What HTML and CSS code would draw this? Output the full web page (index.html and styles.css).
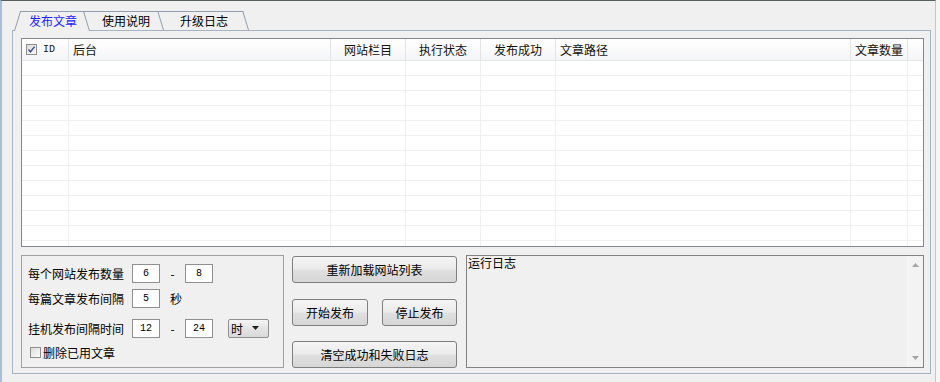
FILE: index.html
```html
<!DOCTYPE html>
<html>
<head>
    <meta charset="utf-8">
    <title>文章发布</title>
    <link rel="stylesheet" href="styles.css">
</head>
<body>
    <div class="window">
        <!-- Tabs -->
        <div class="tabs">
            <div class="tab tab-active">发布文章</div>
            <div class="tab tab-help">使用说明</div>
            <div class="tab tab-log">升级日志</div>
        </div>

        <div class="page">
            <!-- Site list -->
            <div class="list">
                <div class="list-head">
                    <div class="col w-id">
                        <span class="check">
                            <svg width="11" height="11" viewBox="0 0 11 11"><path d="M2.5 5.5 L4.5 7.8 L8.6 2.6" fill="none" stroke="#3d4f86" stroke-width="1.4"/></svg>
                        </span>
                        <span class="mono">ID</span>
                    </div>
                    <div class="col w-host">后台</div>
                    <div class="col w-mid center">网站栏目</div>
                    <div class="col w-mid center">执行状态</div>
                    <div class="col w-mid center">发布成功</div>
                    <div class="col w-path">文章路径</div>
                    <div class="col w-count center">文章数量</div>
                    <div class="col w-rest"></div>
                </div>
                <div class="list-body">
                    <div class="col w-id"></div>
                    <div class="col w-host"></div>
                    <div class="col w-mid"></div>
                    <div class="col w-mid"></div>
                    <div class="col w-mid"></div>
                    <div class="col w-path"></div>
                    <div class="col w-count"></div>
                    <div class="col w-rest"></div>
                </div>
            </div>

            <div class="bottom">
                <!-- Settings -->
                <div class="settings">
                    <div class="field">
                        <span class="label">每个网站发布数量</span>
                        <input class="num" type="text" value="6">
                        <span class="dash">-</span>
                        <input class="num" type="text" value="8">
                    </div>
                    <div class="field field-2">
                        <span class="label">每篇文章发布间隔</span>
                        <input class="num" type="text" value="5">
                        <span class="suffix">秒</span>
                    </div>
                    <div class="field field-3">
                        <span class="label">挂机发布间隔时间</span>
                        <input class="num" type="text" value="12">
                        <span class="dash">-</span>
                        <input class="num" type="text" value="24">
                        <div class="select">
                            <span>时</span>
                            <svg width="7" height="4" viewBox="0 0 7 4"><path d="M0 0 H7 L3.5 4 Z" fill="#222"/></svg>
                        </div>
                    </div>
                    <div class="field field-4">
                        <span class="check check-off"></span>
                        <span>删除已用文章</span>
                    </div>
                </div>

                <!-- Actions -->
                <div class="actions">
                    <button class="btn">重新加载网站列表</button>
                    <div class="btn-row">
                        <button class="btn btn-start">开始发布</button>
                        <button class="btn btn-stop">停止发布</button>
                    </div>
                    <button class="btn">清空成功和失败日志</button>
                </div>

                <!-- Run log -->
                <div class="log">
                    <div class="log-text">运行日志</div>
                    <div class="scroll">
                        <svg width="7" height="4" viewBox="0 0 7 4"><path d="M0 4 H7 L3.5 0 Z" fill="#a6a6a6"/></svg>
                        <svg width="7" height="4" viewBox="0 0 7 4"><path d="M0 0 H7 L3.5 4 Z" fill="#a6a6a6"/></svg>
                    </div>
                </div>
            </div>
        </div>
    </div>
</body>
</html>
```

FILE: styles.css
```css
/* Reset */
* {
    margin: 0;
    padding: 0;
    box-sizing: border-box;
}
body {
    font-family: "Noto Sans CJK SC", "Microsoft YaHei", sans-serif;
    font-size: 12px;
    color: #000;
    background: #f6f6f6;
    width: 940px;
    height: 382px;
    overflow: hidden;
}
.window {
    width: 936px;
    height: 382px;
    background: #f0f0f0;
    border-top: 1px solid #56625c;
    border-left: 2px solid #a9bdd6;
    border-right: 1px solid #bcc8d6;
    padding: 10px 0 0 10px;
}

/* Tabs */
.tabs {
    display: flex;
    align-items: flex-start;
    height: 20px;
    margin: 0 0 -1px 2px;
    position: relative;
    z-index: 1;
}
.tab {
    position: relative;
    height: 19px;
    line-height: 19px;
    white-space: nowrap;
}
.tab::before,
.tab::after {
    content: '';
    position: absolute;
    top: 0;
    bottom: 0;
    z-index: -1;
    background: #f0f0f0;
    border-top: 1px solid #919eae;
    transform-origin: bottom;
}
.tab::before {
    left: 0;
    right: 50%;
    border-left: 1px solid #919eae;
    transform: skewX(-17deg);
}
.tab::after {
    left: 50%;
    right: 0;
    border-right: 1px solid #919eae;
    transform: skewX(17deg);
}
.tab-active {
    height: 20px;
    width: 76px;
    padding-left: 15px;
    color: #1f1fff;
    z-index: 3;
}
.tab-help {
    width: 85px;
    padding-left: 24px;
    margin-left: -12px;
    z-index: 2;
}
.tab-log {
    width: 97px;
    padding-left: 29px;
    margin-left: -12px;
    z-index: 1;
}

/* Page */
.page {
    width: 919px;
    height: 344px;
    border: 1px solid #a5b3c3;
    padding: 7px 6px 5px 8px;
    display: flex;
    flex-direction: column;
    gap: 8px;
}

/* List */
.list {
    height: 209px;
    background: #fff;
    border: 1px solid #828790;
    display: flex;
    flex-direction: column;
    overflow: hidden;
}
.list-head {
    display: flex;
    height: 22px;
    border-bottom: 1px solid #e5e5e5;
    background: linear-gradient(#ffffff, #f4f5f7);
}
.list-head .col {
    display: flex;
    align-items: center;
    line-height: 21px;
    padding-left: 4px;
    border-right: 1px solid #e2e3e5;
    color: #111;
}
.list-head .center {
    justify-content: center;
    padding-left: 0;
}
.list-head .w-rest {
    border-right: none;
}
.list-body {
    flex: 1;
    display: flex;
    background: repeating-linear-gradient(to bottom, transparent 0, transparent 14px, #f0f0f0 14px, #f0f0f0 15px);
}
.list-body .col {
    border-right: 1px solid #f0f0f0;
}
.list-body .w-rest {
    border-right: none;
}
.w-id { width: 47px; }
.w-host { width: 262px; }
.w-mid { width: 75px; }
.w-path { width: 295px; }
.w-count { width: 57px; }
.w-rest { width: 15px; }

.check {
    display: inline-block;
    width: 11px;
    height: 11px;
    border: 1px solid #8f8f8f;
    background: linear-gradient(135deg, #dcdcdc, #fbfbfb);
    flex: none;
}
.check svg {
    display: block;
    margin: -1px 0 0 -1px;
}
.mono {
    font-family: "Liberation Mono", monospace;
    font-size: 10px;
    margin-left: 6px;
}

/* Bottom area */
.bottom {
    display: flex;
    height: 113px;
}
.settings {
    width: 263px;
    border: 1px solid #a0a0a0;
    padding: 7px 0 0 6px;
}
.field {
    display: flex;
    align-items: center;
    height: 20px;
}
.field-2 { margin-top: 5px; }
.field-3 { margin-top: 10px; }
.field-4 { margin-top: 4px; }
.label {
    width: 104px;
}
.num {
    width: 28px;
    height: 19px;
    border: 1px solid #8f8f8f;
    background: #fff;
    font-family: "Liberation Mono", monospace;
    font-size: 10px;
    text-align: center;
    color: #000;
    outline: none;
}
.dash {
    width: 25px;
    text-align: center;
}
.suffix {
    margin-left: 10px;
}
.select {
    margin-left: 15px;
    width: 41px;
    height: 19px;
    border: 1px solid #8f8f8f;
    border-radius: 2px;
    background: linear-gradient(#f5f5f5, #e4e4e4 50%, #d9d9d9);
    display: flex;
    align-items: center;
    justify-content: space-between;
    padding: 0 9px 0 2px;
}
.check-off {
    margin: 0 2px 0 2px;
}

.actions {
    width: 165px;
    margin-left: 8px;
    padding-top: 1px;
    display: flex;
    flex-direction: column;
    justify-content: space-between;
}
.btn {
    height: 27px;
    border: 1px solid #7f7f7f;
    border-radius: 3px;
    background: linear-gradient(#f4f4f4, #ececec 45%, #dfdfdf 55%, #d6d6d6);
    font: inherit;
    color: #000;
}
.btn-row {
    display: flex;
    justify-content: space-between;
}
.btn-start { width: 76px; }
.btn-stop { width: 75px; }

.log {
    width: 458px;
    margin-left: 9px;
    border: 1px solid #828282;
    display: flex;
}
.log-text {
    flex: 1;
    padding: 0 0 0 1px;
    line-height: 14px;
}
.scroll {
    width: 16px;
    background: #f3f3f3;
    border-left: 1px solid #f7f7f7;
    display: flex;
    flex-direction: column;
    align-items: center;
    justify-content: space-between;
    padding: 7px 0;
}
```
